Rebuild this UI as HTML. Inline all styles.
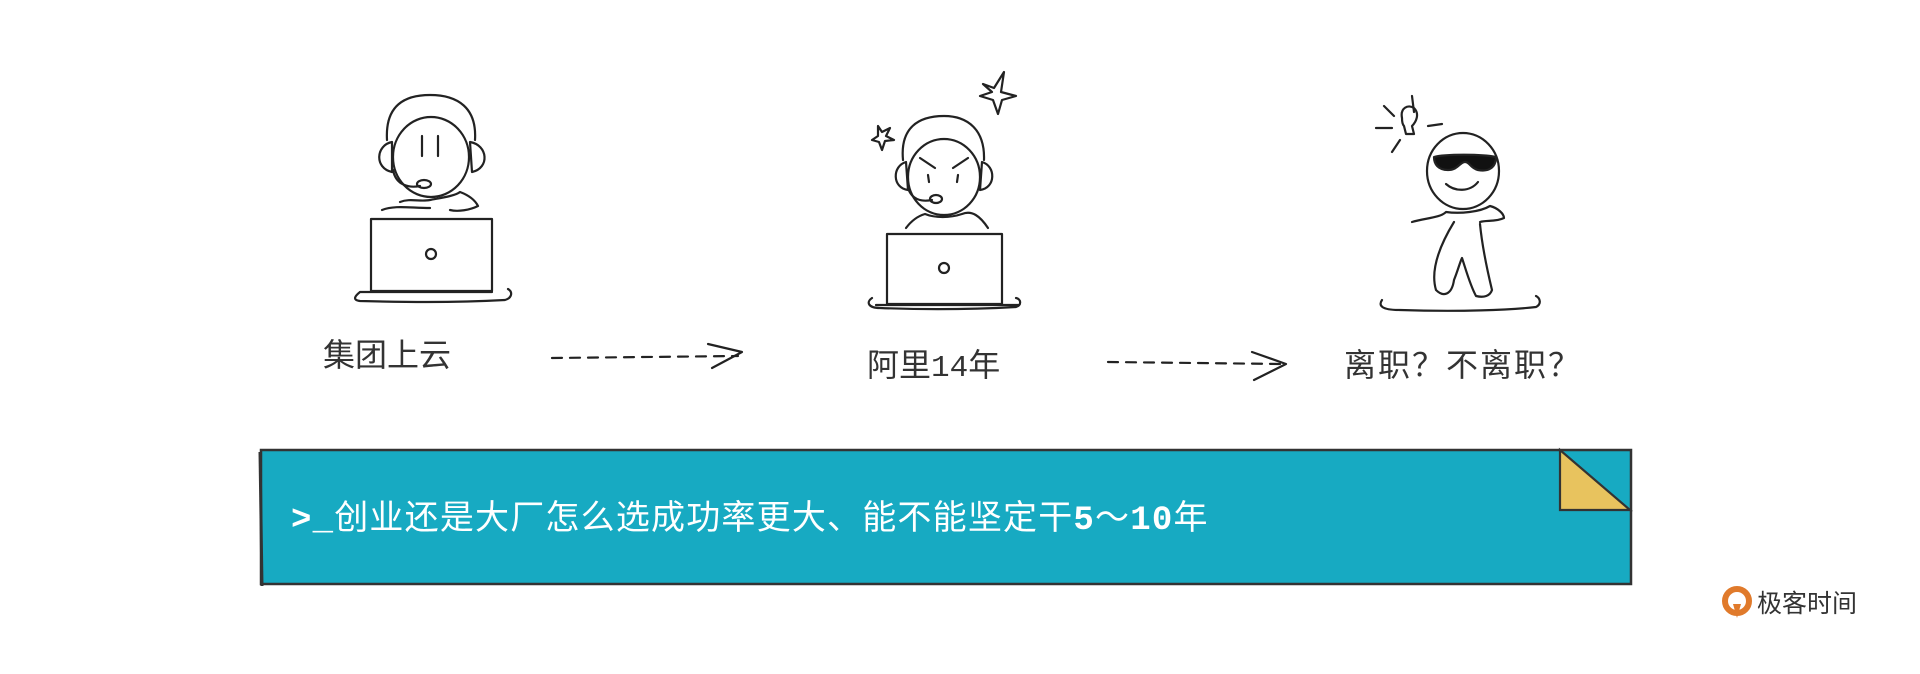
<!DOCTYPE html>
<html><head><meta charset="utf-8"><style>
html,body{margin:0;padding:0;background:#fff;width:1920px;height:674px;overflow:hidden}
svg{display:block}
text{font-family:"Liberation Sans","Noto Sans CJK SC",sans-serif}
</style></head><body>
<svg width="1920" height="674" viewBox="0 0 1920 674" xmlns="http://www.w3.org/2000/svg">
<g fill="none" stroke="#222" stroke-width="2.2" stroke-linecap="round" stroke-linejoin="round">
<path d="M387 140 C385 105 405 95 430 95 C458 95 477 108 475 140"/>
<ellipse cx="431" cy="157" rx="38" ry="40"/>
<path d="M392 142 C376 145 374 168 392 172 Z"/>
<path d="M470 142 C488 145 490 168 472 172 Z"/>
<path d="M422 136 L422 156 M438 136 L438 156"/>
<path d="M393 170 C396 186 410 188 420 186"/>
<ellipse cx="424" cy="184" rx="7" ry="4"/>
<path d="M400 202 C410 198 420 202 430 200 C440 198 455 196 460 192 C468 195 475 200 478 206 C470 210 458 212 450 210 M382 210 C395 205 410 208 430 208"/>
<rect x="371" y="219" width="121" height="72"/>
<circle cx="431" cy="254" r="5"/>
<path d="M360 292 C355 296 352 300 360 301 C400 302 450 303 505 300 C512 298 513 292 508 289 M360 292 L492 292"/>
<path d="M903 160 C900 128 918 116 944 116 C968 116 985 130 984 160"/>
<ellipse cx="944" cy="177" rx="36" ry="38"/>
<path d="M906 162 C892 166 892 188 908 190 Z"/>
<path d="M982 162 C996 166 996 188 980 190 Z"/>
<path d="M920 158 L935 168 M968 158 L953 168 M928 175 L929 182 M958 175 L957 182"/>
<path d="M908 188 C912 200 922 202 932 200"/>
<ellipse cx="936" cy="199" rx="6" ry="4"/>
<path d="M906 228 C912 220 918 216 925 214 C935 218 950 218 962 214 C972 210 980 216 988 228"/>
<rect x="887" y="234" width="115" height="70"/>
<circle cx="944" cy="268" r="5"/>
<path d="M872 298 C866 302 868 308 880 308 C930 310 980 309 1016 307 C1022 305 1021 299 1016 298 M876 305 L1018 305"/>
<path d="M983 84 L994 88 L1004 72 L1001 92 L1016 96 L1002 100 L998 114 L993 100 L980 96 L992 92 Z" />
<path d="M878 126 L882 132 L890 128 L886 136 L894 140 L885 141 L882 150 L879 142 L872 140 L878 136 Z"/>
<ellipse cx="1463" cy="171" rx="36" ry="38"/>
<path d="M1434 157 C1445 154 1482 154 1496 157 C1496 168 1488 172 1478 170 C1470 168 1470 162 1465 162 C1460 162 1458 170 1448 170 C1438 170 1434 164 1434 157 Z" fill="#111"/>
<path d="M1446 184 C1455 192 1470 192 1478 182"/>
<path d="M1412 222 C1425 218 1440 218 1446 212 C1460 214 1480 212 1490 206 C1498 208 1504 214 1504 218 C1496 222 1486 220 1480 222"/>
<path d="M1454 222 C1440 245 1430 270 1436 290 C1444 298 1452 294 1454 280 C1458 270 1460 262 1462 258 C1466 270 1470 285 1476 296 C1484 298 1490 296 1492 290 C1486 265 1482 245 1480 224"/>
<path d="M1382 300 C1378 306 1382 310 1400 310 C1460 312 1510 310 1536 307 C1542 304 1540 298 1536 296"/>
<path d="M1402 118 C1400 108 1408 104 1414 108 C1420 114 1416 122 1412 126 L1414 134 L1406 134 L1404 126 C1402 124 1402 120 1402 118 Z"/>
<path d="M1376 128 L1392 128 M1384 106 L1394 116 M1412 96 L1414 112 M1428 126 L1442 124 M1392 152 L1400 140"/>
<path d="M552 358 L738 356" stroke-dasharray="10 8"/>
<path d="M708 344 L742 352 L712 368"/>
<path d="M1108 362 L1282 364" stroke-dasharray="10 8"/>
<path d="M1252 352 L1286 364 L1254 380"/>
</g>
<text x="323" y="366" font-size="32" fill="#333">集团上云</text>
<text x="867" y="376" font-size="32" fill="#333">阿里<tspan font-family="Liberation Mono" font-size="31">14</tspan>年</text>
<text x="1344" y="376" font-size="32" fill="#333" letter-spacing="2">离职？不离职？</text>
<rect x="261" y="450" width="1370" height="134" fill="#17aac2" stroke="#333" stroke-width="2.5"/>
<path d="M260 452 L262 586" stroke="#333" stroke-width="3"/>
<path d="M1560 450 L1560 510 L1630 510 Z" fill="#e8c35e" stroke="#333" stroke-width="2.2"/>
<text x="291" y="529" font-size="34" fill="#fff" letter-spacing="1.2"><tspan font-weight="bold" font-family="Liberation Mono">&gt;_</tspan>创业还是大厂怎么选成功率更大、能不能坚定干<tspan font-family="Liberation Mono" font-weight="bold">5</tspan>～<tspan font-family="Liberation Mono" font-weight="bold">10</tspan>年</text>
<circle cx="1737" cy="601" r="12" fill="none" stroke="#e07a2b" stroke-width="6"/>
<path d="M1733 604 L1741 604 L1737 618 Z" fill="#e07a2b"/>
<text x="1757" y="612" font-size="25" fill="#333">极客时间</text>
</svg>
</body></html>
